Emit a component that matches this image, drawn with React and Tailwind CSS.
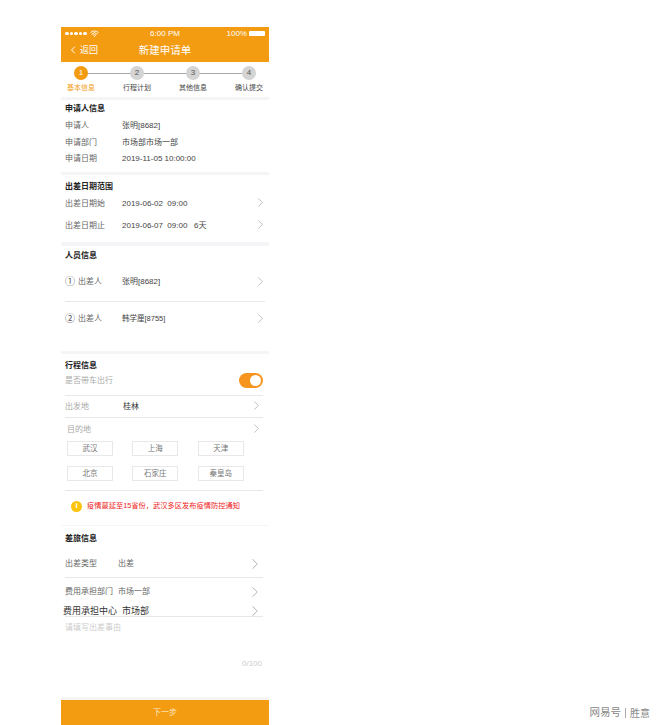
import React from 'react';
import { ChevronLeft, ChevronRight, Wifi } from 'lucide-react';

const FONT = { fontFamily: '"Liberation Sans", "Noto Sans CJK SC", sans-serif' };

function Chevron({ className = '-mr-[3px] -translate-y-[2px]', size = 15 }) {
  return <ChevronRight size={size} strokeWidth={1} className={`shrink-0 text-[#9a9a9a] ${className}`} />;
}

function Title({ children }) {
  return <div className="text-[8px] leading-[12px] font-bold text-[#222]">{children}</div>;
}

function Row({ label, value, h, arrow }) {
  return (
    <div className="flex items-center" style={{ height: h }}>
      <span className="w-[57px] shrink-0 text-[#666]">{label}</span>
      <span className="flex-1 whitespace-pre text-[#444]">{value}</span>
      {arrow && <Chevron />}
    </div>
  );
}

function Stepper() {
  const steps = ['基本信息', '行程计划', '其他信息', '确认提交'];
  return (
    <div className="relative flex h-[35px] justify-between bg-white pt-[4px]">
      <div className="absolute top-[11px] right-[20px] left-[20px] h-px bg-[#a8a8a8]" />
      {steps.map((s, i) => (
        <div key={s} className="relative flex w-[40px] flex-col items-center">
          <span className={`flex h-[14px] w-[14px] items-center justify-center rounded-full text-[8px] ${i === 0 ? 'bg-[#f39c12] text-white' : 'bg-[#d4d4d4] text-[#555]'}`}>{i + 1}</span>
          <span className={`mt-[3px] text-[7px] leading-[10px] ${i === 0 ? 'text-[#f39c12]' : 'text-[#444]'}`}>{s}</span>
        </div>
      ))}
    </div>
  );
}

function Tag({ children }) {
  return <div className="flex h-[15px] w-[46px] items-center justify-center border border-[#e8e8e8] text-[7.5px] text-[#777]">{children}</div>;
}

function Person({ mark, name, small, h, className = '' }) {
  return (
    <div className={`flex items-center ${className}`} style={{ height: h }}>
      <span className="w-[13px] text-[10px] text-[#555]">{mark}</span>
      <span className="w-[44px] text-[#666]">出差人</span>
      <span className={`flex-1 text-[#444] ${small ? 'text-[7.5px]' : ''}`}>{name}</span>
      <Chevron className="-mr-[3px] -translate-y-[1px]" />
    </div>
  );
}

export default function App() {
  return (
    <div className="relative h-[725px] w-[660px] overflow-hidden bg-white pt-[27px] pl-[61px]" style={FONT}>
      <div className="flex h-[673px] w-[208px] flex-col bg-[#f5f5f8] text-[8px] leading-[12px]">
        <div className="h-[35px] bg-[#f39c12] text-white">
          <div className="flex h-[13px] items-center justify-between px-[4px] text-[8px]">
            <div className="flex w-[50px] items-center gap-[3px]">
              <div className="flex gap-[1px]">
                {[0, 1, 2, 3, 4].map((d) => <span key={d} className="h-[3.5px] w-[3.5px] rounded-full bg-white" />)}
              </div>
              <Wifi size={9} strokeWidth={2.5} />
            </div>
            <span>6:00 PM</span>
            <div className="flex w-[50px] items-center justify-end gap-[2px]">
              <span>100%</span>
              <span className="h-[5px] w-[16px] rounded-[1px] bg-white" />
            </div>
          </div>
          <div className="relative flex h-[21px] items-center justify-center pb-[1px] text-[10.5px]">
            <div className="absolute left-[6px] flex items-center text-[9px]">
              <ChevronLeft size={12} strokeWidth={2} className="-mr-[1px]" />
              <span className="ml-[2px]">返回</span>
            </div>
            新建申请单
          </div>
        </div>

        <Stepper />

        <section className="mt-[3px] h-[72px] bg-white px-[4px] pt-[3px]">
          <Title>申请人信息</Title>
          <div className="mt-[3px]">
            <Row h="16px" label="申请人" value="张明[8682]" />
            <Row h="17px" label="申请部门" value="市场部市场一部" />
            <Row h="16px" label="申请日期" value="2019-11-05 10:00:00" />
          </div>
        </section>

        <section className="mt-[3px] h-[67px] bg-white px-[4px] pt-[6px]">
          <Title>出差日期范围</Title>
          <Row h="22px" label="出差日期始" value="2019-06-02  09:00" arrow />
          <Row h="22px" label="出差日期止" value="2019-06-07  09:00   6天" arrow />
        </section>

        <section className="mt-[4px] h-[105px] bg-white px-[4px] pt-[4px]">
          <Title>人员信息</Title>
          <Person mark="①" name="张明[8682]" h="35px" className="mt-[5px] border-b border-[#e8e8e8] pb-[4px]" />
          <Person mark="②" name="韩学厘[8755]" small h="34px" />
        </section>

        <section className="mt-[3px] h-[171px] bg-white pt-[6px] pr-[6px] pl-[4px]">
          <Title>行程信息</Title>
          <div className="flex h-[18px] items-center justify-between text-[#aaa]">
            <span>是否带车出行</span>
            <span className="flex h-[15px] w-[24px] -translate-y-[1px] items-center justify-end rounded-full bg-[#f7941d] pr-[2px]">
              <span className="h-[11px] w-[11px] rounded-full bg-white" />
            </span>
          </div>
          <div className="mt-[5px] flex h-[22px] items-center border-t border-[#e8e8e8]">
            <span className="w-[58px] shrink-0 text-[#aaa]">出发地</span>
            <span className="flex-1 text-[#333]">桂林</span>
            <Chevron className="-mr-[1px] -translate-y-[1px]" />
          </div>
          <div className="flex h-[24px] items-center border-t border-[#e8e8e8] pl-[2px]">
            <span className="flex-1 text-[#aaa]">目的地</span>
            <Chevron className="-mr-[1px] -translate-y-[1px]" />
          </div>
          <div className="grid grid-cols-3 justify-items-start gap-y-[10px] pl-[2px]">
            {['武汉', '上海', '天津', '北京', '石家庄', '秦皇岛'].map((t) => <Tag key={t}>{t}</Tag>)}
          </div>
          <div className="mt-[9px] flex h-[30px] items-center gap-[5px] border-t border-[#e8e8e8] pt-[1px] pl-[6px] text-[7.25px] whitespace-nowrap text-[#f01818]">
            <span className="flex h-[11px] w-[11px] items-center justify-center rounded-full bg-[#fdc40f] text-[8px] font-bold text-white">i</span>
            疫情蔓延至15省份，武汉多区发布疫情防控通知
          </div>
        </section>

        <section className="mt-[1px] h-[171px] bg-white pt-[7px] pr-[6px] pl-[4px]">
          <Title>差旅信息</Title>
          <div className="mt-[5px] flex h-[28px] items-center border-b border-[#e8e8e8] text-[#666]">
            <span className="w-[53px]">出差类型</span>
            <span className="flex-1">出差</span>
            <Chevron size={18} className="-mr-[1px]" />
          </div>
          <div className="flex h-[28px] items-center text-[#666]">
            <span className="w-[53px] whitespace-nowrap">费用承担部门</span>
            <span className="flex-1">市场一部</span>
            <Chevron size={18} className="-mr-[1px]" />
          </div>
          <div className="-mt-[1px] -ml-[2px] flex h-[11px] items-center text-[9px] text-[#333]">
            <span className="w-[59px] whitespace-nowrap">费用承担中心</span>
            <span className="flex-1">市场部</span>
            <Chevron size={18} className="-mr-[1px]" />
          </div>
          <div className="border-t border-[#e8e8e8] pt-[5px] text-[#ccc]">请填写出差事由</div>
          <div className="mt-[24px] pr-[1px] text-right text-[#ccc]">0/100</div>
        </section>
      </div>

      <div className="flex h-[25px] w-[208px] items-center justify-center bg-[#f39c12] text-[8px] text-[#fde9c8]">下一步</div>

      <div className="absolute right-[10px] bottom-[4px] flex items-center text-[10.5px] text-[#888]">
        网易号<span className="mx-[4px] h-[10px] w-px bg-[#aaa]" /><span className="text-[10px]">胜意</span>
      </div>
    </div>
  );
}
